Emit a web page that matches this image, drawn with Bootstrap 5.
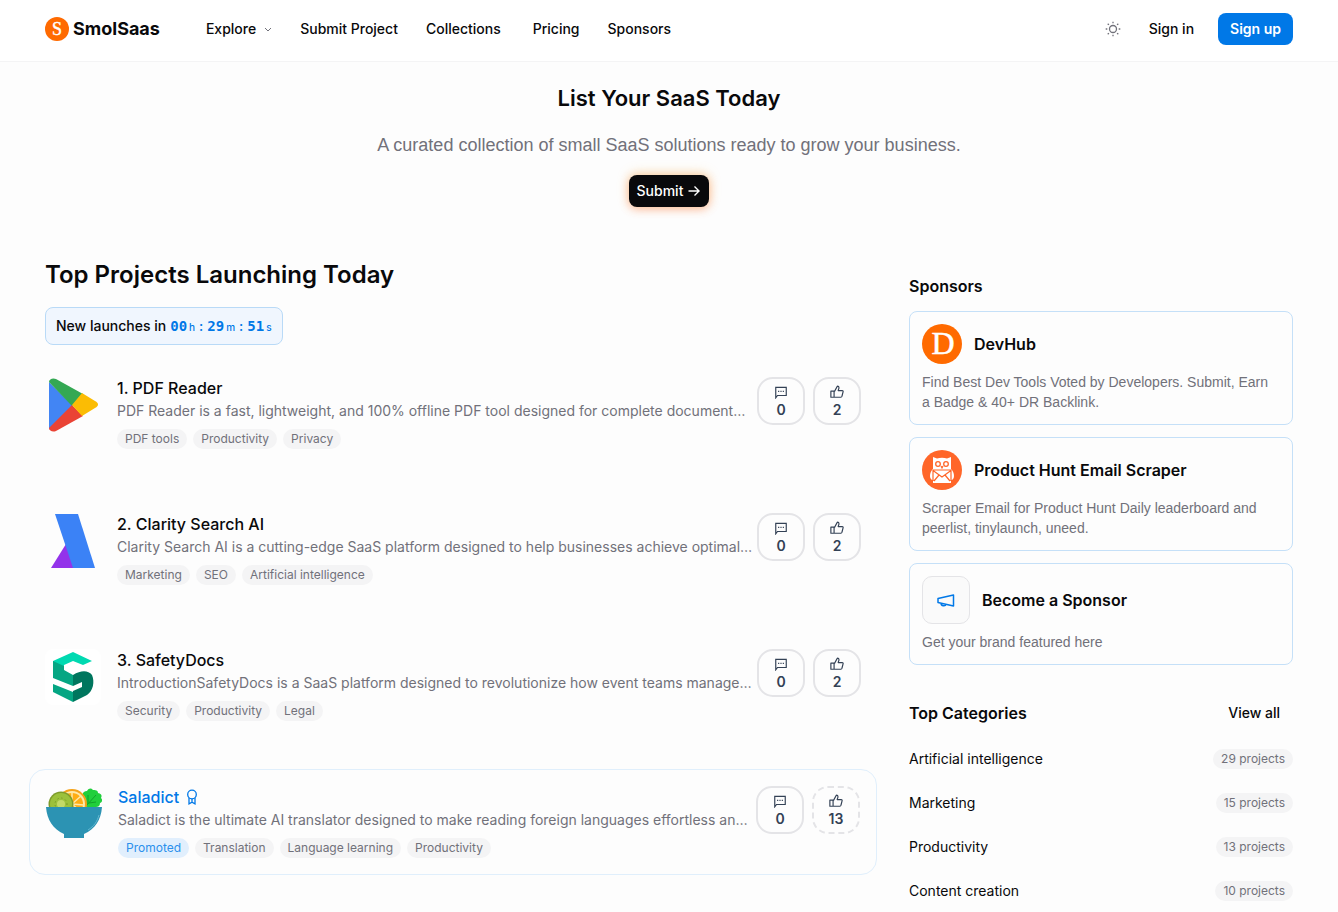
<!DOCTYPE html>
<html lang="en">
<head>
<meta charset="utf-8">
<meta name="viewport" content="width=device-width, initial-scale=1">
<title>SmolSaas</title>
<link href="https://cdn.jsdelivr.net/npm/bootstrap@5.3.0/dist/css/bootstrap.min.css" rel="stylesheet">
<style>
  :root { --brand: #0078e7; --muted: #71717a; --ink: #09090b; --chip: #f4f4f5; --line: #c5e0f8; }
  body { font-family: Inter, "Liberation Sans", sans-serif; font-size: 14px; line-height: 20px; color: var(--ink); background: #fdfdfd; }
  a { color: inherit; text-decoration: none; }
  svg { display: block; flex-shrink: 0; }
  .page-shell { max-width: 1280px; padding: 0 16px; margin: 0 auto; }
  .site-header { background: #fff; border-bottom: 1px solid #f4f4f5; }
  .site-header .page-shell { height: 61px; padding-bottom: 3px; }
  .brand-name { font-size: 18px; line-height: 28px; font-weight: 700; }
  .main-nav { gap: 28px; margin-left: 46px; font-weight: 500; }
  .plain-btn { border: 0; background: none; padding: 0; color: inherit; font-weight: 500; }
  .signin { font-weight: 500; margin: 0 24px 0 28px; }
  .signup { background: var(--brand); color: #fff; font-weight: 600; font-size: 14px; line-height: 20px; padding: 6px 12px; border-radius: 8px; border: 0; }
  .hero { padding-top: 20px; }
  .hero h1 { font-size: 22px; line-height: 32px; font-weight: 600; margin-bottom: 17px; }
  .hero p, .sponsor p { font-family: "Liberation Sans", Arial, sans-serif; }
  .hero p { font-size: 18px; line-height: 28px; color: var(--muted); margin-bottom: 16px; }
  .submit-btn { background: var(--ink); color: #fff; font-weight: 500; font-size: 14px; line-height: 20px; padding: 6px 8px; border: 0; border-radius: 8px;
    box-shadow: 0 -2px 12px rgba(245,190,90,.4), 0 2px 10px rgba(255,110,60,.45); }
  .content-grid { display: grid; grid-template-columns: repeat(3, minmax(0, 1fr)); column-gap: 48px; margin-top: 52px; }
  .projects { grid-column: span 2; }
  .projects h2 { font-size: 24px; line-height: 32px; font-weight: 600; margin-bottom: 16px; }
  .countdown { height: 38px; padding: 0 10px; border: 1px solid #b9daf7; border-radius: 8px; background: #f0f6fe; font-weight: 500; margin-bottom: 16px; }
  .clock { color: var(--brand); font-weight: 500; gap: 4px; }
  .clock b { font-family: "DejaVu Sans Mono", monospace; font-weight: 700; }
  .clock small { font-size: 10px; margin-left: 2px; }
  .project-list { display: grid; grid-template-columns: minmax(0, 1fr); gap: 32px; margin: 0 -16px; }
  .project { padding: 16px; gap: 4px; }
  .project .tile { margin-right: 12px; }
  .project.promoted { border: 1px solid #e0effc; border-radius: 16px; }
  .project h3 { font-size: 16px; line-height: 22px; font-weight: 500; margin: 0 0 2px; }
  .project p { line-height: 20px; color: var(--muted); margin: 0 0 8px; }
  .promoted h3 { color: var(--brand); gap: 5px; }
  .tags { gap: 6px; }
  .chip { display: inline-block; background: var(--chip); color: var(--muted); font-size: 12px; line-height: 16px; padding: 2px 8px; border-radius: 10px; }
  .chip.ad { background: #e1effd; color: #2b90ec; }
  .tile { width: 56px; height: 56px; }
  .vote { width: 48px; height: 48px; border: 2px solid #e4e4e7; border-radius: 16px; background: transparent; color: #334155; font-weight: 600; font-size: 14px; line-height: 20px; padding: 2px 0 0; gap: 1px; }
  .vote.dashed { border-style: dashed; }
  aside { padding-top: 15px; }
  aside h2 { font-size: 16px; line-height: 24px; font-weight: 600; margin: 0; }
  .sponsor-list { gap: 12px; margin-top: 13px; }
  .sponsor { display: block; border: 1px solid var(--line); border-radius: 8px; padding: 12px; }
  .sponsor .head { gap: 12px; }
  .sponsor h3 { font-size: 16px; line-height: 24px; font-weight: 600; margin: 0; }
  .sponsor p { color: var(--muted); margin: 8px 0 0; padding-right: 4px; }
  .horn { width: 48px; height: 48px; border: 1px solid #e4e4e7; border-radius: 10px; background: #fafafa; color: var(--brand); }
  .cats-head { margin-top: 32px; margin-bottom: 20px; }
  .cats-head a { padding: 6px 13px; font-weight: 500; }
  .cats { display: grid; gap: 24px; margin: 0; }
</style>
</head>
<body>
<svg width="0" height="0" class="position-absolute" aria-hidden="true">
  <symbol id="chat" viewBox="0 0 24 24"><path d="M3 22V4h18v14H6z" fill="none" stroke="currentColor" stroke-width="2"/><path d="M7 10h2v2H7zm4 0h2v2h-2zm4 0h2v2h-2z" fill="currentColor"/></symbol>
  <symbol id="thumb" viewBox="0 0 24 24"><path d="M7 10v11M1.500 10.500H8L12.500 2c2 0 3 1.200 3 3L14 9.500h7c1 0 1.700.8 1.500 1.800l-2 8c-.2 1-.9 1.700-1.900 1.700H1.500z" fill="none" stroke="currentColor" stroke-width="2" stroke-linejoin="round"/></symbol>
</svg>

<header class="site-header">
  <div class="page-shell d-flex align-items-center">
    <a href="#" class="d-flex align-items-center gap-1">
      <svg width="24" height="24" viewBox="0 0 24 24"><circle cx="12" cy="12" r="12" fill="#ff6a00"/><text x="12" y="18" text-anchor="middle" font-family="Liberation Serif, serif" font-size="18" fill="#fff" stroke="#fff" stroke-width=".4">S</text></svg>
      <span class="brand-name">SmolSaas</span>
    </a>
    <nav class="main-nav d-flex align-items-center">
      <button class="plain-btn d-flex align-items-center" type="button">Explore
        <svg class="ms-2" width="8" height="8" viewBox="0 0 8 8"><path d="M1 3l3 3 3-3" fill="none" stroke="#71717a"/></svg></button>
      <a href="#">Submit Project</a>
      <a href="#" class="me-1">Collections</a>
      <a href="#">Pricing</a>
      <a href="#">Sponsors</a>
    </nav>
    <div class="d-flex align-items-center ms-auto">
      <button class="plain-btn" type="button" aria-label="Toggle theme">
        <svg width="16" height="16" viewBox="0 0 16 16" fill="none" stroke="#71717a" stroke-width="1.300"><circle cx="8" cy="8" r="3.500"/><path d="M8 .7v1.600M8 13.700v1.600M.7 8h1.600M13.700 8h1.600M2.700 2.700l1.200 1.200M12.100 12.100l1.200 1.200M2.700 13.300l1.200-1.200M12.100 3.900l1.200-1.200"/></svg>
      </button>
      <a href="#" class="signin">Sign in</a>
      <button class="signup" type="button">Sign up</button>
    </div>
  </div>
</header>

<main class="page-shell">
  <section class="hero d-flex flex-column align-items-center text-center">
    <h1>List Your SaaS Today</h1>
    <p>A curated collection of small SaaS solutions ready to grow your business.</p>
    <button class="submit-btn d-flex align-items-center gap-1" type="button">Submit
      <svg width="14" height="14" viewBox="0 0 14 14"><path d="M1.500 7h11M7.500 2.500L12 7l-4.500 4.500" fill="none" stroke="#fff" stroke-width="1.400"/></svg></button>
  </section>

  <div class="content-grid">
    <section class="projects">
      <h2>Top Projects Launching Today</h2>
      <div class="countdown d-inline-flex align-items-center gap-1">
        <span>New launches in</span>
        <span class="clock d-flex"><span><b>00</b><small>h</small></span><span>:</span><span><b>29</b><small>m</small></span><span>:</span><span><b>51</b><small>s</small></span></span>
      </div>

      <div class="project-list">
        <article class="project d-flex">
          <svg class="tile" viewBox="0 0 56 56">
            <path d="M4 5v47l24-23z" fill="#4285f4"/>
            <path d="M4 5c0-3 4-4.500 7-3l27 15-11 12z" fill="#34a853"/>
            <path d="M4 51c0 3 4 4.500 7 3l27-15-11-11z" fill="#ea4335"/>
            <path d="M37 16l13 8c4 2 4 5 0 7l-13 8-10-11z" fill="#fbbc04"/>
          </svg>
          <div class="flex-grow-1 overflow-hidden">
            <h3><a href="#">1. PDF Reader</a></h3>
            <p class="text-truncate">PDF Reader is a fast, lightweight, and 100% offline PDF tool designed for complete document…</p>
            <div class="d-flex tags"><a href="#" class="chip">PDF tools</a><a href="#" class="chip">Productivity</a><a href="#" class="chip">Privacy</a></div>
          </div>
          <div class="d-flex gap-2">
            <button class="vote d-flex flex-column align-items-center justify-content-center" type="button" aria-label="Comments"><svg width="14" height="14"><use href="#chat"/></svg>0</button>
            <button class="vote d-flex flex-column align-items-center justify-content-center" type="button" aria-label="Upvote"><svg width="14" height="14"><use href="#thumb"/></svg>2</button>
          </div>
        </article>

        <article class="project d-flex">
          <svg class="tile" viewBox="0 0 56 56">
            <path d="M6 55l15-24 10 24z" fill="#9333ea"/>
            <path d="M10 1h23l17 54H28z" fill="#3b82f6"/>
          </svg>
          <div class="flex-grow-1 overflow-hidden">
            <h3><a href="#">2. Clarity Search AI</a></h3>
            <p class="text-truncate">Clarity Search AI is a cutting-edge SaaS platform designed to help businesses achieve optimal…</p>
            <div class="d-flex tags"><a href="#" class="chip">Marketing</a><a href="#" class="chip">SEO</a><a href="#" class="chip">Artificial intelligence</a></div>
          </div>
          <div class="d-flex gap-2">
            <button class="vote d-flex flex-column align-items-center justify-content-center" type="button" aria-label="Comments"><svg width="14" height="14"><use href="#chat"/></svg>0</button>
            <button class="vote d-flex flex-column align-items-center justify-content-center" type="button" aria-label="Upvote"><svg width="14" height="14"><use href="#thumb"/></svg>2</button>
          </div>
        </article>

        <article class="project d-flex">
          <svg class="tile" viewBox="0 0 56 56">
            <rect width="56" height="56" rx="8" fill="#fff"/>
            <path d="M8 12L28 3l19 9-9 4-10-4-9 4v8l-11-5z" fill="#00d9b1"/>
            <path d="M8 12l11 5v4l9 5v11L8 29z" fill="#05a683"/>
            <path d="M8 35l20 8v10L8 43z" fill="#05a683"/>
            <path d="M28 26c8-5 15-5 19 0 3 7 1 16-5 20l-14 7V42l9-4v-5l-9 4z" fill="#00765e"/>
          </svg>
          <div class="flex-grow-1 overflow-hidden">
            <h3><a href="#">3. SafetyDocs</a></h3>
            <p class="text-truncate">IntroductionSafetyDocs is a SaaS platform designed to revolutionize how event teams manage…</p>
            <div class="d-flex tags"><a href="#" class="chip">Security</a><a href="#" class="chip">Productivity</a><a href="#" class="chip">Legal</a></div>
          </div>
          <div class="d-flex gap-2">
            <button class="vote d-flex flex-column align-items-center justify-content-center" type="button" aria-label="Comments"><svg width="14" height="14"><use href="#chat"/></svg>0</button>
            <button class="vote d-flex flex-column align-items-center justify-content-center" type="button" aria-label="Upvote"><svg width="14" height="14"><use href="#thumb"/></svg>2</button>
          </div>
        </article>

        <article class="project promoted d-flex">
          <svg class="tile" viewBox="0 0 56 56">
            <path d="M37 24V10c-1-3 1-5 4-5 2-3 4-3 6-1 4 0 5 1 5 3 4 1 4 3 3 5 2 2 1 4-1 5 0 3-2 4-4 4-2 2-4 3-6 1-2 2-5 3-7 2z" fill="#21cf3c"/>
            <path d="M40 20l10-11M43 17l7-1M42 18V9" stroke="#11a22b" fill="none"/>
            <circle cx="26" cy="18" r="15" fill="#f5a31a"/><circle cx="26" cy="18" r="13" fill="#ffe9a8"/><circle cx="26" cy="18" r="11" fill="#ffad14"/>
            <path d="M26 18V6M26 18l9-8M26 18l12 1M26 18l-9-8M26 18l9 8" stroke="#ffe9a8" stroke-width="1.500"/>
            <circle cx="15" cy="18" r="12.500" fill="#7d9b2a"/><circle cx="15" cy="18" r="11" fill="#9cc13b"/><circle cx="15" cy="18" r="4" fill="#c3d968"/>
            <circle cx="15" cy="18" r="6" fill="none" stroke="#6c8a24" stroke-dasharray="1 3"/>
            <path d="M0 21h56c-1 13-7 22-18 27v4H18v-4C7 43 1 34 0 21z" fill="#2c93b3"/>
            <path d="M53 29c-2 7-5 11-11 15" stroke="#63b8d1" fill="none"/>
          </svg>
          <div class="flex-grow-1 overflow-hidden">
            <h3 class="d-flex align-items-center"><a href="#">Saladict</a>
              <svg width="16" height="16" viewBox="0 0 16 16" fill="none" stroke="currentColor" stroke-width="1.300"><circle cx="8" cy="5.500" r="4.300"/><path d="M5 9v5.800l3-1.600 3 1.600V9M8 9.800v3.400"/></svg></h3>
            <p class="text-truncate">Saladict is the ultimate AI translator designed to make reading foreign languages effortless an…</p>
            <div class="d-flex tags"><span class="chip ad">Promoted</span><a href="#" class="chip">Translation</a><a href="#" class="chip">Language learning</a><a href="#" class="chip">Productivity</a></div>
          </div>
          <div class="d-flex gap-2">
            <button class="vote d-flex flex-column align-items-center justify-content-center" type="button" aria-label="Comments"><svg width="14" height="14"><use href="#chat"/></svg>0</button>
            <button class="vote dashed d-flex flex-column align-items-center justify-content-center" type="button" aria-label="Upvote"><svg width="14" height="14"><use href="#thumb"/></svg>13</button>
          </div>
        </article>
      </div>
    </section>

    <aside>
      <h2>Sponsors</h2>
      <div class="d-grid sponsor-list">
        <a href="#" class="sponsor">
          <div class="d-flex align-items-center head">
            <svg width="40" height="40" viewBox="0 0 40 40"><circle cx="20" cy="20" r="20" fill="#ff6a00"/><text x="21" y="30" text-anchor="middle" font-family="Liberation Serif, serif" font-size="32" fill="#fff" stroke="#fff" stroke-width=".5">D</text></svg>
            <h3>DevHub</h3>
          </div>
          <p>Find Best Dev Tools Voted by Developers. Submit, Earn a Badge &amp; 40+ DR Backlink.</p>
        </a>
        <a href="#" class="sponsor">
          <div class="d-flex align-items-center head">
            <svg width="40" height="40" viewBox="0 0 40 40"><circle cx="20" cy="20" r="20" fill="#ff6629"/>
              <path d="M11 7l4 1.500c3-1 7-1 10 0L29 7v12c2 2 3 4 3 7 0 2-1 4-3 4v3H11v-3c-2 0-3-2-3-4 0-3 1-5 3-7z" fill="#fff"/>
              <circle cx="16" cy="14" r="2.300" fill="none" stroke="#ff6629" stroke-width="1.300"/><circle cx="24" cy="14" r="2.300" fill="none" stroke="#ff6629" stroke-width="1.300"/>
              <path d="M19 16l1 2 1-2M11 20h18v11M11 20v11M11 20.500l9 6.500 9-6.500M12 31l5-6M28 31l-5-6" fill="none" stroke="#ff6629" stroke-width="1.200"/></svg>
            <h3>Product Hunt Email Scraper</h3>
          </div>
          <p>Scraper Email for Product Hunt Daily leaderboard and peerlist, tinylaunch, uneed.</p>
        </a>
        <a href="#" class="sponsor">
          <div class="d-flex align-items-center head">
            <span class="horn d-flex align-items-center justify-content-center"><svg width="20" height="20" viewBox="0 0 20 20" fill="none" stroke="currentColor" stroke-width="1.500" stroke-linejoin="round"><path d="M2 8.500L17.500 5v11L2 12.500zM5 13.200c0 3 4.500 3.500 5 1"/></svg></span>
            <h3>Become a Sponsor</h3>
          </div>
          <p>Get your brand featured here</p>
        </a>
      </div>
      <div class="cats-head d-flex align-items-center justify-content-between"><h2>Top Categories</h2><a href="#">View all</a></div>
      <ul class="cats list-unstyled">
        <li class="d-flex justify-content-between"><a href="#">Artificial intelligence</a><span class="chip">29 projects</span></li>
        <li class="d-flex justify-content-between"><a href="#">Marketing</a><span class="chip">15 projects</span></li>
        <li class="d-flex justify-content-between"><a href="#">Productivity</a><span class="chip">13 projects</span></li>
        <li class="d-flex justify-content-between"><a href="#">Content creation</a><span class="chip">10 projects</span></li>
      </ul>
    </aside>
  </div>
</main>
<script src="https://cdn.jsdelivr.net/npm/bootstrap@5.3.0/dist/js/bootstrap.bundle.min.js"></script>
</body>
</html>
